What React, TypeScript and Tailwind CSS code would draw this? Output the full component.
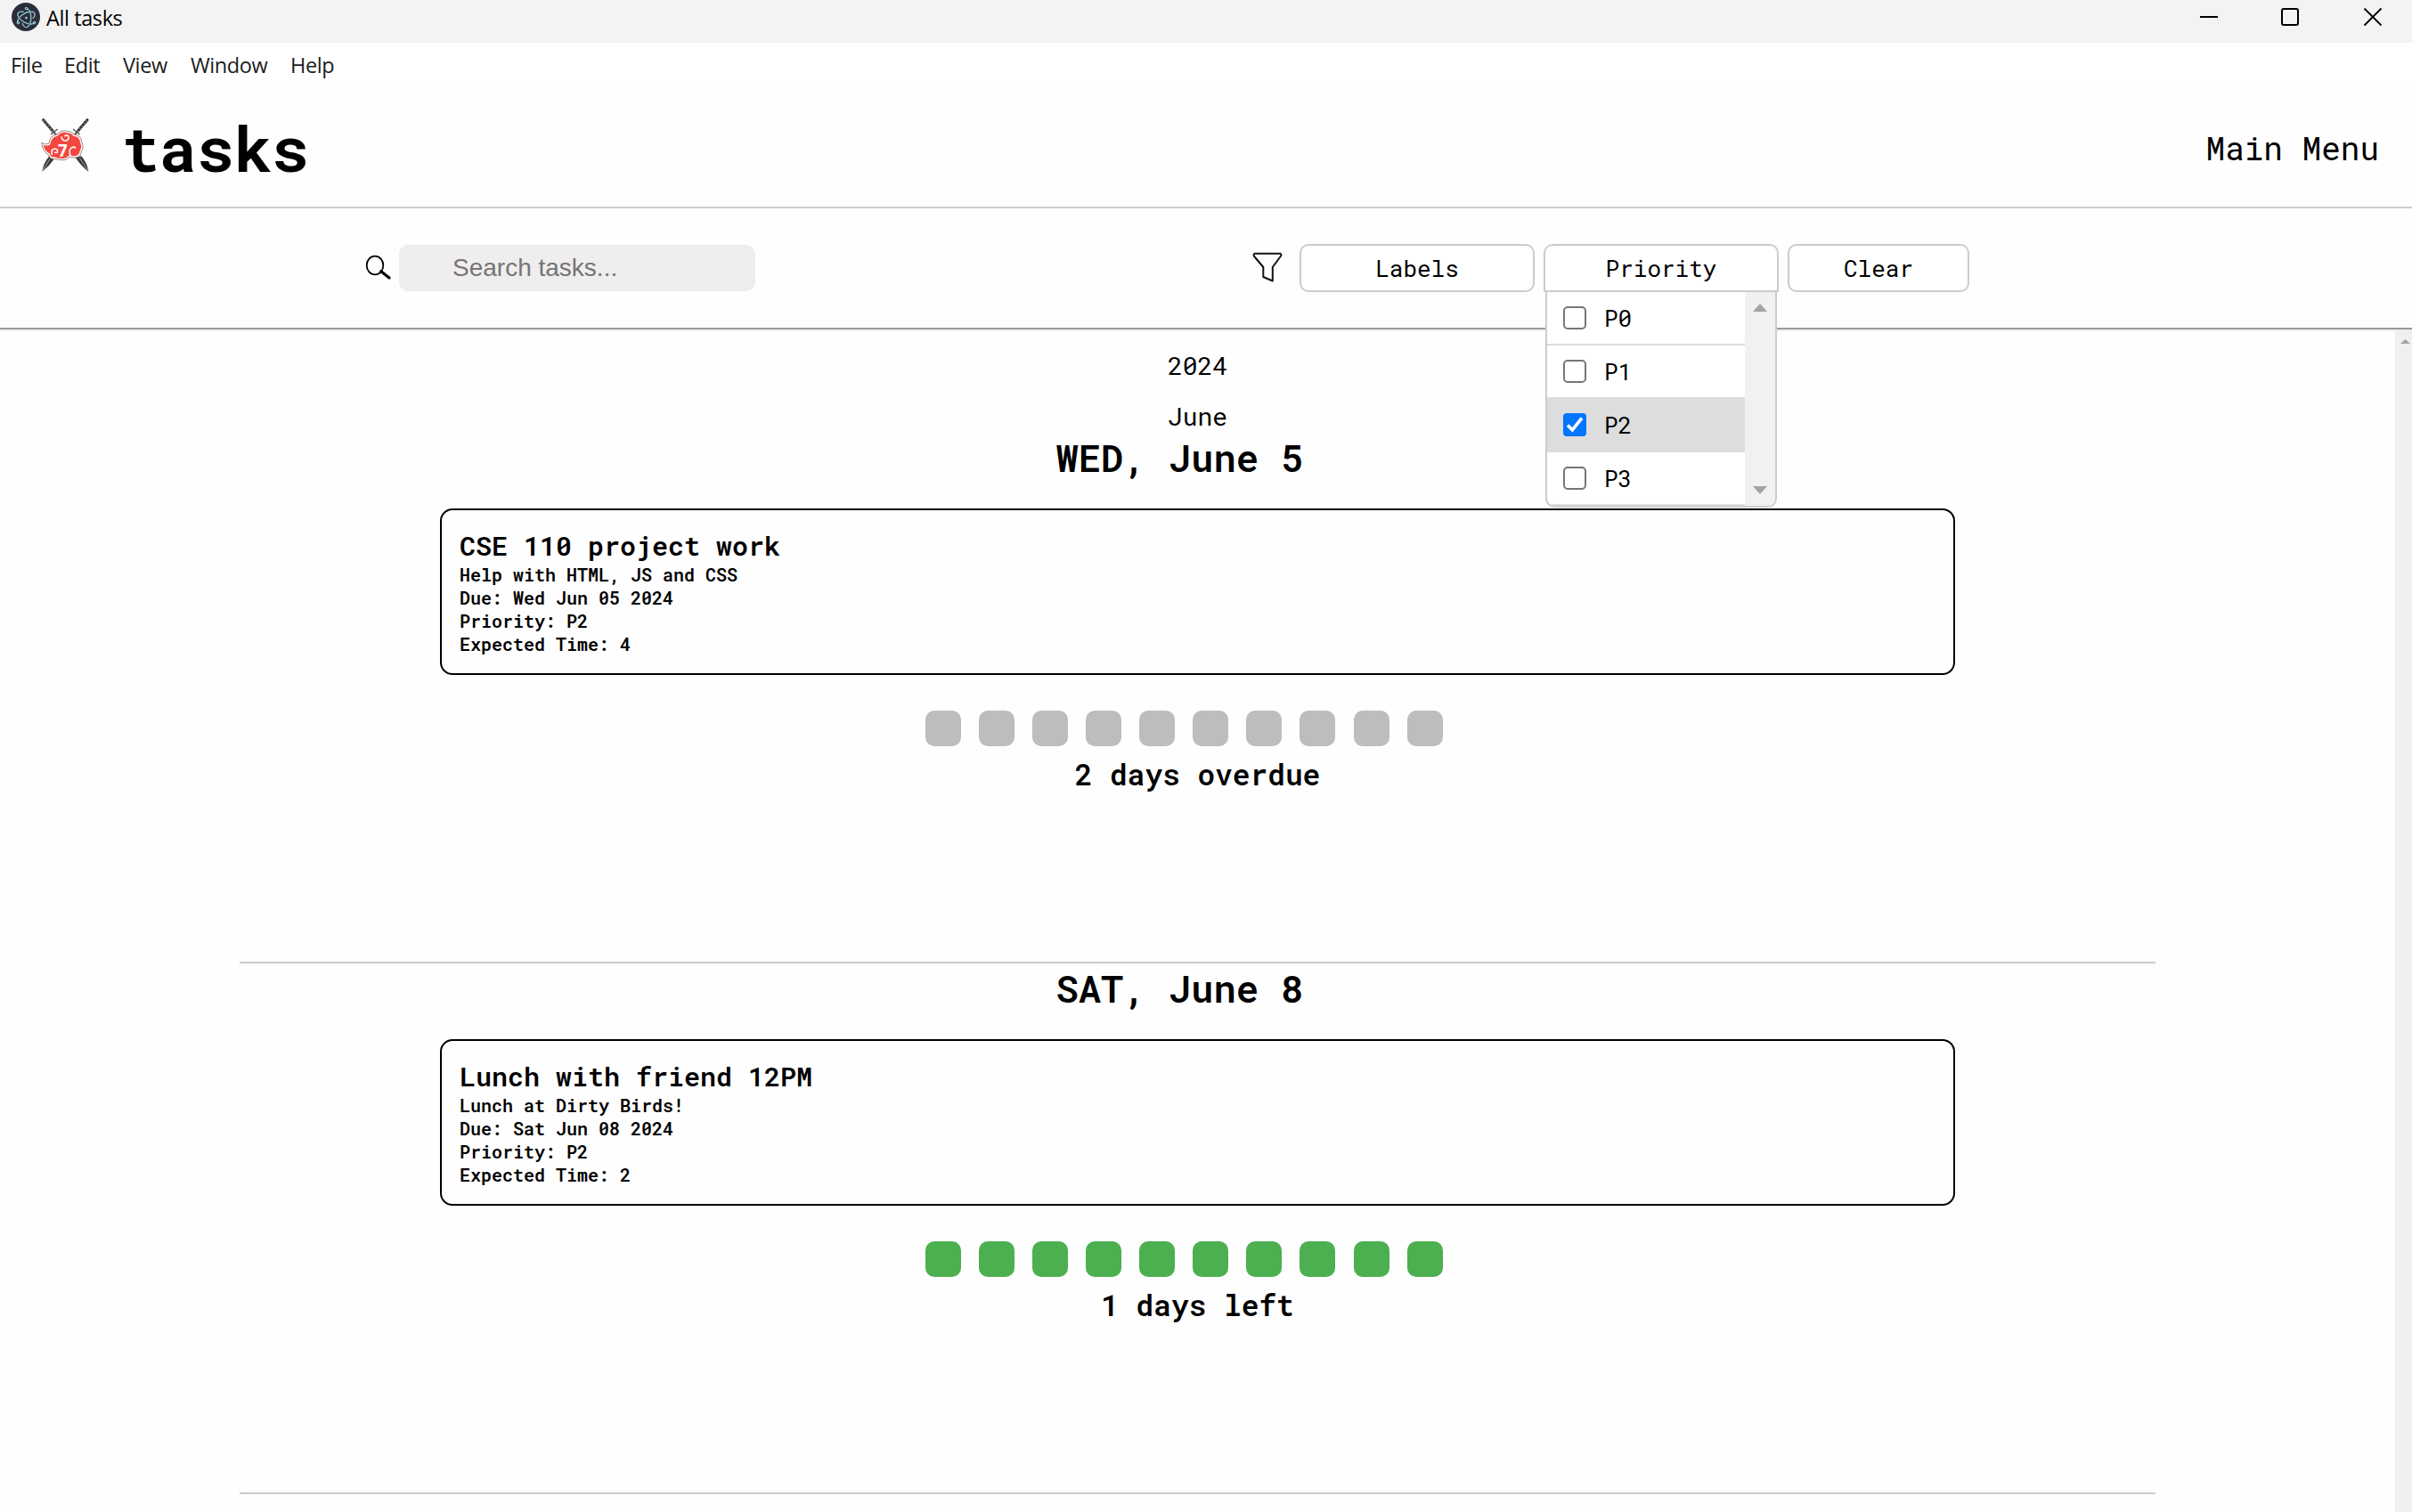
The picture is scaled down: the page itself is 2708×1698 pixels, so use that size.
import type { ReactNode } from 'react';
import { SiElectron } from 'react-icons/si';

const menuItems = [
  { label: 'File', cell: 'w-[60px]' },
  { label: 'Edit', cell: 'w-[66px]' },
  { label: 'View', cell: 'w-[76px]' },
  { label: 'Window', cell: 'w-[112px]' },
  { label: 'Help', cell: 'w-[60px]' },
];

const priorities = [
  { label: 'P0', checked: false },
  { label: 'P1', checked: false },
  { label: 'P2', checked: true },
  { label: 'P3', checked: false },
];

type Task = {
  day: string;
  title: string;
  details: string[];
  status: string;
  box: string;
};

const tasks: Task[] = [
  {
    day: 'WED, June 5',
    title: 'CSE 110 project work',
    details: ['Help with HTML, JS and CSS', 'Due: Wed Jun 05 2024', 'Priority: P2', 'Expected Time: 4'],
    status: '2 days overdue',
    box: 'bg-[#bdbdbd]',
  },
  {
    day: 'SAT, June 8',
    title: 'Lunch with friend 12PM',
    details: ['Lunch at Dirty Birds!', 'Due: Sat Jun 08 2024', 'Priority: P2', 'Expected Time: 2'],
    status: '1 days left',
    box: 'bg-[#4caf50]',
  },
];

function TitleBar() {
  return (
    <div className="flex h-12 shrink-0 items-start justify-between bg-[#f3f3f3] pl-[13px] pr-[33px]">
      <div className="flex items-start">
        <span className="mt-[3px] flex size-8 items-center justify-center rounded-full bg-[#2b2e3a]">
          <SiElectron size={23} color="#a5e3ee" stroke="#a5e3ee" strokeWidth={0.5} />
        </span>
        <span className="ml-[7px] whitespace-pre font-['Open_Sans',sans-serif] text-[23.5px] leading-[41px] tracking-[-0.4px] text-black">
          All tasks
        </span>
      </div>
      <svg width="206" height="22" viewBox="0 0 206 22" className="mt-2" fill="none" stroke="#000" strokeWidth="2">
        <path d="M1 11H21" />
        <rect x="93" y="2" width="18" height="18" rx="2" />
        <path d="M185.500 1.500L204.500 20.500M204.500 1.500L185.500 20.500" strokeWidth="1.800" />
      </svg>
    </div>
  );
}

function MenuBar() {
  return (
    <div className="flex h-[50px] shrink-0 items-center bg-white pl-3 pt-[2px] font-['Open_Sans',sans-serif] text-[23.5px] tracking-[-0.4px] text-[#1b1b1b]">
      {menuItems.map((m) => (
        <span key={m.label} className={m.cell}>
          {m.label}
        </span>
      ))}
    </div>
  );
}

function Logo() {
  return (
    <svg width="100" height="90" viewBox="0 0 300 270" className="mt-[22px]" fill="none">
      <g strokeLinecap="round">
        <path d="M86 44L120 84" stroke="#2a2a2a" strokeWidth="9" />
        <path d="M234 44L200 84" stroke="#2a2a2a" strokeWidth="9" />
        <path d="M88 47L120 84M232 47L200 84" stroke="#999" strokeWidth="4" strokeDasharray="2 9" />
        <path d="M112 92L133 76M208 92L187 76" stroke="#555" strokeWidth="4" />
        <path d="M122 86L136 102M198 86L184 102" stroke="#666" strokeWidth="7" />
      </g>
      <path d="M106 166Q86 190 82 218Q106 200 122 176Z" fill="#3a3a3a" />
      <path d="M214 166Q234 190 238 218Q214 200 194 170Z" fill="#3a3a3a" />
      <path d="M108 176L84 214M208 172L236 214" stroke="#bbb" strokeWidth="2.500" />
      <path
        d="M80 121Q94 130 105 123Q108 96 131 94Q143 78 164 81Q184 83 190 94Q212 93 215 118Q224 136 214 150Q214 170 192 171Q178 171 174 168Q163 183 143 178Q132 178 126 175Q108 178 104 162Q84 152 80 121Z"
        fill="#fff"
        stroke="#8c6a66"
        strokeWidth="2.500"
      />
      <path
        d="M86 128Q98 134 109 127Q112 102 133 98Q145 84 162 86Q182 87 188 99Q208 98 210 120Q218 135 209 148Q208 165 192 166Q179 166 174 161Q162 178 144 173Q130 174 124 169Q110 171 108 158Q90 150 86 128Z"
        fill="#f4473f"
      />
      <g stroke="#fff" strokeWidth="4.500" strokeLinecap="round">
        <path d="M147 102Q151 116 163 114Q174 110 170 99Q165 93 159 98" />
        <path d="M115 160Q111 143 124 141Q136 142 133 152Q130 157 124 153" />
        <path d="M178 164Q170 150 178 140Q188 132 194 138" />
      </g>
      <text
        x="151"
        y="168"
        textAnchor="middle"
        fill="#fff"
        fontSize="56"
        fontWeight="700"
        fontFamily="Open Sans, sans-serif"
      >
        7
      </text>
    </svg>
  );
}

function Header() {
  return (
    <header className="flex h-[136px] shrink-0 items-start justify-between border-b-2 border-[#ccc] pl-5 pr-[37px]">
      <div className="flex items-start">
        <Logo />
        <h1 className="ml-[17px] mt-[22px] text-[70px] font-bold leading-[93px]">tasks</h1>
      </div>
      <span className="mt-[44px] text-[36px] leading-[48px]">Main Menu</span>
    </header>
  );
}

function FilterButton({ children, className }: { children: ReactNode; className: string }) {
  return (
    <div
      className={`flex h-[54px] items-center justify-center border-2 border-[#ccc] bg-white text-[26px] leading-none ${className}`}
    >
      {children}
    </div>
  );
}

function Checkbox({ checked }: { checked: boolean }) {
  return checked ? (
    <span className="flex size-[26px] items-center justify-center rounded-[4px] bg-[#0075ff]">
      <svg width="26" height="26" viewBox="0 0 26 26" fill="none" stroke="#fff" strokeWidth="3.600">
        <path d="M5 13.500L10.300 18.800L21 5.500" />
      </svg>
    </span>
  ) : (
    <span className="size-[26px] rounded-[5px] border-2 border-[#767676] bg-white" />
  );
}

function PriorityMenu() {
  return (
    <div className="absolute left-[2px] top-[54px] z-10 flex w-[260px] overflow-hidden rounded-b-[10px] border-2 border-t-0 border-[#ccc] bg-white">
      <div className="w-[222px]">
        {priorities.map((p) => (
          <div
            key={p.label}
            className={`flex h-[60px] items-center border-b-2 border-[#ddd] pl-[18px] ${p.checked ? '-mt-[2px] h-[62px] bg-[#ddd] pt-[2px]' : ''}`}
          >
            <Checkbox checked={p.checked} />
            <span className="ml-[20px] text-[26px] leading-none">{p.label}</span>
          </div>
        ))}
      </div>
      <div className="flex flex-1 flex-col items-center justify-between bg-[#f1f1f1] pb-[13px] pt-[13px]">
        <svg width="16" height="9" viewBox="0 0 16 9" fill="#a3a3a3">
          <path d="M0 9L8 0L16 9Z" />
        </svg>
        <svg width="16" height="9" viewBox="0 0 16 9" fill="#a3a3a3">
          <path d="M0 0L8 9L16 0Z" />
        </svg>
      </div>
    </div>
  );
}

function Toolbar() {
  return (
    <div className="flex h-[138px] shrink-0 items-start border-b-2 border-[#eee] pl-[409px] shadow-[inset_0_-2px_0_#999]">
      <svg width="32" height="32" viewBox="0 0 32 32" fill="none" stroke="#000" className="mt-[51px]">
        <ellipse cx="12" cy="13" rx="9.300" ry="10.300" strokeWidth="1.800" />
        <path d="M18.800 19.800L28 27" strokeWidth="3.200" strokeLinecap="round" />
      </svg>
      <div className="ml-[7px] mt-[41px] flex h-[52px] w-[400px] items-center rounded-[10px] bg-[#efeded] pl-[60px] font-['Liberation_Sans',Arial,sans-serif] text-[28px] leading-none text-[#757575]">
        Search tasks...
      </div>
      <svg
        width="34"
        height="36"
        viewBox="0 0 34 36"
        fill="none"
        stroke="#111"
        strokeWidth="2"
        strokeLinejoin="round"
        className="ml-[558px] mt-[49px]"
      >
        <path d="M2.500 1.800H31.500Q33 2.500 32 4.500L22.800 17V32.500L12.300 28V17L1.800 4.500Q1 2.500 2.500 1.800Z" />
      </svg>
      <div className="ml-[19px] mt-[40px] flex">
        <FilterButton className="w-[264px] rounded-[10px]">Labels</FilterButton>
        <div className="relative ml-[10px]">
          <FilterButton className="w-[264px] rounded-t-[10px]">Priority</FilterButton>
          <PriorityMenu />
        </div>
        <FilterButton className="ml-[10px] w-[204px] rounded-[10px]">Clear</FilterButton>
      </div>
    </div>
  );
}

function TaskDay({ task }: { task: Task }) {
  return (
    <section className="mx-[269px] flex flex-col border-b-2 border-[#ccc]">
      <h2 className="pr-[40px] text-center text-[42.1px] font-semibold leading-[55px]">{task.day}</h2>
      <div className="mx-[225px] mt-[30px] rounded-[14px] border-2 border-black p-5 font-semibold">
        <div className="text-[30px] leading-[39px]">{task.title}</div>
        {task.details.map((line) => (
          <div key={line} className="text-[20px] leading-[26px]">
            {line}
          </div>
        ))}
      </div>
      <div className="mt-10 flex justify-center gap-[20.1px] pr-[30.5px]">
        {Array.from({ length: 10 }, (_, i) => (
          <span key={i} className={`size-10 rounded-[10px] ${task.box}`} />
        ))}
      </div>
      <div className="mb-[189px] mt-[10px] text-center text-[32.8px] font-semibold leading-[43px]">{task.status}</div>
    </section>
  );
}

export default function App() {
  return (
    <div className="flex h-[1698px] w-[2708px] flex-col overflow-hidden bg-[#fefefe] font-['Roboto_Mono','DejaVu_Sans_Mono',monospace] text-black">
      <TitleBar />
      <MenuBar />
      <Header />
      <Toolbar />
      <div className="flex min-h-0 flex-1">
        <main className="min-w-0 flex-1 overflow-hidden pt-5">
          <div className="text-center text-[28px] leading-[37px]">2024</div>
          <div className="mt-5 text-center text-[28px] leading-[37px]">June</div>
          {tasks.map((t) => (
            <TaskDay key={t.day} task={t} />
          ))}
        </main>
        <div className="flex w-[19px] shrink-0 justify-center bg-[#f0f0f0] pt-[9px]">
          <svg width="11" height="5" viewBox="0 0 11 5" fill="#a3a3a3" className="ml-[3px]">
            <path d="M0 5L5.500 0L11 5Z" />
          </svg>
        </div>
      </div>
    </div>
  );
}
